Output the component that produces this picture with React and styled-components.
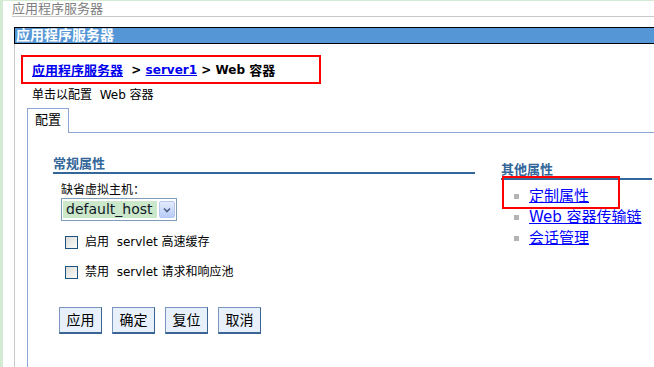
import React from 'react';
import styled, { createGlobalStyle } from 'styled-components';

const FONT = `"DejaVu Sans", "Noto Sans CJK SC", sans-serif`;

const Global = createGlobalStyle`
  html, body { margin: 0; padding: 0; background: #fff; height: 100%; overflow: hidden; }
  body { font-family: ${FONT}; color: #000; }
  #root { height: 100%; }
`;

const Page = styled.div`
  height: 100%;
  box-sizing: border-box;
  border-top: 1px solid #d3ead3;
  border-left: 3px solid #d3ead3;
  padding-left: 9px;
  display: flex;
  flex-direction: column;
`;

const PageTitle = styled.div`
  font-size: 13px;
  line-height: 15px;
  color: #808080;
  border-bottom: 1px solid #c8c8c8;
`;

const Portlet = styled.div`
  margin-top: 10px;
  margin-left: 2px;
  flex: 1;
  display: flex;
  flex-direction: column;
`;

const PortletHeader = styled.div`
  background: #5596d6;
  border: 1px solid #000;
  border-right: none;
  color: #fff;
  font-weight: bold;
  font-size: 14px;
  line-height: 15px;
  padding-left: 1px;
`;

const PortletBody = styled.div`
  flex: 1;
  border-left: 1px solid #c8c8c8;
  padding: 11px 0 0 6px;
  display: flex;
  flex-direction: column;
`;

const Breadcrumb = styled.div`
  width: 300px;
  height: 29px;
  box-sizing: border-box;
  border: 2px solid #f00;
  display: flex;
  align-items: center;
  padding-left: 9px;
  font-size: 12px;
  font-weight: bold;
  white-space: pre;
`;

const Han = styled.span`
  font-size: 13px;
`;

const CrumbLink = styled.a`
  color: #0000ee;
  text-decoration: underline;
`;

const Instruction = styled.div`
  font-size: 12px;
  line-height: 16px;
  margin: 3px 0 0 11px;
  white-space: pre;
`;

const TabStrip = styled.div`
  display: flex;
  align-items: stretch;
  margin: 5px 0 0 6px;
  height: 25px;
`;

const Tab = styled.div`
  width: 42px;
  box-sizing: border-box;
  border: 1px solid #8ca6d6;
  border-bottom: none;
  padding: 3px 0 0 7px;
  font-size: 13px;
  line-height: 16px;
`;

const TabFiller = styled.div`
  flex: 1;
  border-bottom: 1px solid #8ca6d6;
`;

const TabPanel = styled.div`
  flex: 1;
  margin-left: 6px;
  border-left: 1px solid #8ca6d6;
  padding: 23px 0 0 25px;
  display: grid;
  grid-template-columns: 422px 151px;
  column-gap: 26px;
  align-items: start;
`;

const Column = styled.div`
  display: flex;
  flex-direction: column;
  margin-top: ${(p) => p.$offset || 0}px;
`;

const SectionHeading = styled.div`
  font-size: 13px;
  font-weight: bold;
  line-height: 15px;
  color: #336699;
  border-bottom: 2px solid #336699;
  padding-bottom: 1px;
`;

const FieldLabel = styled.div`
  font-size: 12px;
  line-height: 14px;
  margin: 9px 0 0 8px;
`;

const SelectBox = styled.div`
  margin: 1px 0 0 8px;
  width: 116px;
  height: 23px;
  box-sizing: border-box;
  border: 1px solid #7f9db9;
  display: flex;
  align-items: center;
  padding: 0 1px 0 1px;
  gap: 2px;
`;

const SelectValue = styled.div`
  flex: 1;
  height: 17px;
  background: #cbe8cb;
  font-size: 14px;
  line-height: 17px;
  padding-left: 3px;
  color: #101828;
`;

const SelectButton = styled.div`
  width: 16px;
  height: 17px;
  box-sizing: border-box;
  border: 1px solid #b7c8f0;
  border-radius: 2px;
  background: linear-gradient(#e3ebfe, #b9ccf9);
  display: flex;
  align-items: center;
  justify-content: center;
`;

const CheckRow = styled.div`
  display: flex;
  align-items: center;
  gap: 7px;
  margin: ${(p) => p.$top}px 0 0 12px;
  font-size: 12px;
  line-height: 14px;
  white-space: pre;
`;

const CheckBox = styled.div`
  width: 13px;
  height: 13px;
  box-sizing: border-box;
  border: 1px solid #1c5180;
  background: linear-gradient(135deg, #dcdcd6, #fbfbf9);
`;

const ButtonRow = styled.div`
  display: flex;
  gap: 10px;
  margin: 28px 0 0 6px;
`;

const Button = styled.div`
  width: 43px;
  height: 27px;
  box-sizing: border-box;
  background: #e8f0fb;
  border: 1px solid #7896bf;
  border-right-color: #3b6593;
  border-bottom: 2px solid #3b6593;
  font-size: 14px;
  line-height: 24px;
  text-align: center;
`;

const LinkList = styled.ul`
  list-style: none;
  margin: 6px 0 0 0;
  padding: 0;
`;

const LinkItem = styled.li`
  position: relative;
  display: flex;
  align-items: center;
  font-size: 15px;
  line-height: 21px;
  padding-left: 13px;
  white-space: pre;

  &::before {
    content: '';
    width: 5px;
    height: 5px;
    background: #b4b4b4;
    margin-right: 10px;
  }
`;

const PropLink = styled.a`
  color: #0000ff;
  text-decoration: underline;
`;

const Highlight = styled.div`
  position: absolute;
  left: 1px;
  top: -10px;
  width: 118px;
  height: 33px;
  box-sizing: border-box;
  border: 2px solid #f00;
  pointer-events: none;
`;

const Chevron = () => (
  <svg width="8" height="6" viewBox="0 0 8 6">
    <path d="M1 1.5 L4 4.5 L7 1.5" fill="none" stroke="#4d6185" strokeWidth="1.6" />
  </svg>
);

export default function App() {
  return (
    <>
      <Global />
      <Page>
        <PageTitle>应用程序服务器</PageTitle>
        <Portlet>
          <PortletHeader>应用程序服务器</PortletHeader>
          <PortletBody>
            <Breadcrumb>
              <CrumbLink>
                <Han>应用程序服务器</Han>
              </CrumbLink>
              {'  > '}
              <CrumbLink>server1</CrumbLink>
              {' > Web '}
              <Han>容器</Han>
            </Breadcrumb>
            <Instruction>{'单击以配置  Web 容器'}</Instruction>
            <TabStrip>
              <Tab>配置</Tab>
              <TabFiller />
            </TabStrip>
            <TabPanel>
              <Column>
                <SectionHeading>常规属性</SectionHeading>
                <FieldLabel>缺省虚拟主机：</FieldLabel>
                <SelectBox>
                  <SelectValue>default_host</SelectValue>
                  <SelectButton>
                    <Chevron />
                  </SelectButton>
                </SelectBox>
                <CheckRow $top={14}>
                  <CheckBox />
                  {'启用  servlet 高速缓存'}
                </CheckRow>
                <CheckRow $top={16}>
                  <CheckBox />
                  {'禁用  servlet 请求和响应池'}
                </CheckRow>
                <ButtonRow>
                  <Button>应用</Button>
                  <Button>确定</Button>
                  <Button>复位</Button>
                  <Button>取消</Button>
                </ButtonRow>
              </Column>
              <Column $offset={6}>
                <SectionHeading>其他属性</SectionHeading>
                <LinkList>
                  <LinkItem>
                    <PropLink>定制属性</PropLink>
                    <Highlight />
                  </LinkItem>
                  <LinkItem>
                    <PropLink>Web 容器传输链</PropLink>
                  </LinkItem>
                  <LinkItem>
                    <PropLink>会话管理</PropLink>
                  </LinkItem>
                </LinkList>
              </Column>
            </TabPanel>
          </PortletBody>
        </Portlet>
      </Page>
    </>
  );
}
